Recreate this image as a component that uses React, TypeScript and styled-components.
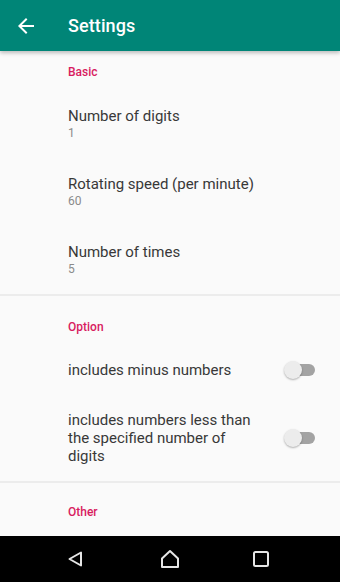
import * as React from 'react';
import styled, { createGlobalStyle } from 'styled-components';

const COLORS = {
  primary: '#008577',
  accent: '#d81b60',
  background: '#fafafa',
  text: '#383838',
  secondary: '#8a8a8a',
  divider: '#ececec',
};

const GlobalStyle = createGlobalStyle`
  html, body {
    margin: 0;
    padding: 0;
    background: ${COLORS.background};
  }
  body {
    font-family: Roboto, 'Liberation Sans', sans-serif;
  }
`;

const Screen = styled.div`
  width: 340px;
  height: 582px;
  display: flex;
  flex-direction: column;
  background: ${COLORS.background};
  overflow: hidden;
`;

const AppBar = styled.header`
  position: relative;
  z-index: 1;
  height: 51px;
  flex: none;
  display: flex;
  align-items: center;
  background: ${COLORS.primary};
  box-shadow: 0 2px 4px rgba(0, 0, 0, 0.25);
`;

const BackButton = styled.div`
  width: 68px;
  height: 51px;
  display: flex;
  align-items: center;
  padding-left: 14px;
  box-sizing: border-box;
`;

const Title = styled.h1`
  margin: 0;
  color: #fff;
  font-size: 18px;
  font-weight: 500;
  letter-spacing: 0.1px;
`;

const Content = styled.main`
  flex: 1;
  overflow: hidden;
`;

const Category = styled.div<{ $top: number }>`
  padding: ${p => p.$top}px 0 10px 68px;
  font-size: 12px;
  line-height: 16px;
  font-weight: 500;
  color: ${COLORS.accent};
`;

const PrefRow = styled.div`
  padding: 17px 25px 17px 68px;
`;

const PrefTitle = styled.div`
  font-size: 15px;
  line-height: 18px;
  color: ${COLORS.text};
`;

const PrefSummary = styled.div`
  font-size: 12px;
  line-height: 16px;
  color: ${COLORS.secondary};
`;

const SwitchRow = styled.div`
  display: flex;
  align-items: center;
  padding: 16px 25px 16px 68px;
`;

const SwitchText = styled(PrefTitle)`
  flex: 1;
  max-width: 196px;
  margin-right: auto;
`;

const SwitchTrack = styled.div`
  position: relative;
  width: 28px;
  height: 12px;
  flex: none;
  border-radius: 6px;
  background: #a3a3a3;
`;

const SwitchThumb = styled.div`
  position: absolute;
  left: -3px;
  top: -3px;
  width: 18px;
  height: 18px;
  border-radius: 50%;
  background: #ececec;
  box-shadow: 0 1px 2px rgba(0, 0, 0, 0.3);
`;

const Divider = styled.hr`
  margin: 0;
  border: none;
  height: 2px;
  background: ${COLORS.divider};
`;

const NavBar = styled.nav`
  height: 46px;
  flex: none;
  background: #000;
  display: grid;
  grid-template-columns: 150px 90px 100px;
  align-items: center;
`;

const NavButton = styled.div<{ $offset: number }>`
  display: flex;
  justify-content: flex-start;
  padding-left: ${p => p.$offset}px;
`;

const ArrowBack = () => (
  <svg width="24" height="24" viewBox="0 0 24 24">
    <path
      fill="#fff"
      d="M20 11H7.83l5.59-5.59L12 4l-8 8 8 8 1.41-1.41L7.83 13H20v-2z"
    />
  </svg>
);

const NavBack = () => (
  <svg width="18" height="18" viewBox="0 0 18 18">
    <path
      d="M15 2.5v13L3.5 9z"
      fill="none"
      stroke="#e6e6e6"
      strokeWidth="2"
      strokeLinejoin="round"
    />
  </svg>
);

const NavHome = () => (
  <svg width="22" height="20" viewBox="0 0 22 20">
    <path
      d="M3 9.5L11 2l8 7.5V18H3z"
      fill="none"
      stroke="#e6e6e6"
      strokeWidth="2"
      strokeLinejoin="round"
    />
  </svg>
);

const NavRecent = () => (
  <svg width="18" height="18" viewBox="0 0 18 18">
    <rect
      x="2"
      y="2"
      width="14"
      height="14"
      rx="1.5"
      fill="none"
      stroke="#e6e6e6"
      strokeWidth="2"
    />
  </svg>
);

const Switch = () => (
  <SwitchTrack>
    <SwitchThumb />
  </SwitchTrack>
);

const basicPrefs = [
  { title: 'Number of digits', summary: '1' },
  { title: 'Rotating speed (per minute)', summary: '60' },
  { title: 'Number of times', summary: '5' },
];

const optionPrefs = [
  'includes minus numbers',
  'includes numbers less than the specified number of digits',
];

const App = () => (
  <>
    <GlobalStyle />
    <Screen>
      <AppBar>
        <BackButton>
          <ArrowBack />
        </BackButton>
        <Title>Settings</Title>
      </AppBar>
      <Content>
        <Category $top={13}>Basic</Category>
        {basicPrefs.map(({ title, summary }) => (
          <PrefRow key={title}>
            <PrefTitle>{title}</PrefTitle>
            <PrefSummary>{summary}</PrefSummary>
          </PrefRow>
        ))}
        <Divider />
        <Category $top={23}>Option</Category>
        {optionPrefs.map(text => (
          <SwitchRow key={text}>
            <SwitchText>{text}</SwitchText>
            <Switch />
          </SwitchRow>
        ))}
        <Divider />
        <Category $top={21}>Other</Category>
      </Content>
      <NavBar>
        <NavButton $offset={66}>
          <NavBack />
        </NavButton>
        <NavButton $offset={9}>
          <NavHome />
        </NavButton>
        <NavButton $offset={12}>
          <NavRecent />
        </NavButton>
      </NavBar>
    </Screen>
  </>
);

export default App;
